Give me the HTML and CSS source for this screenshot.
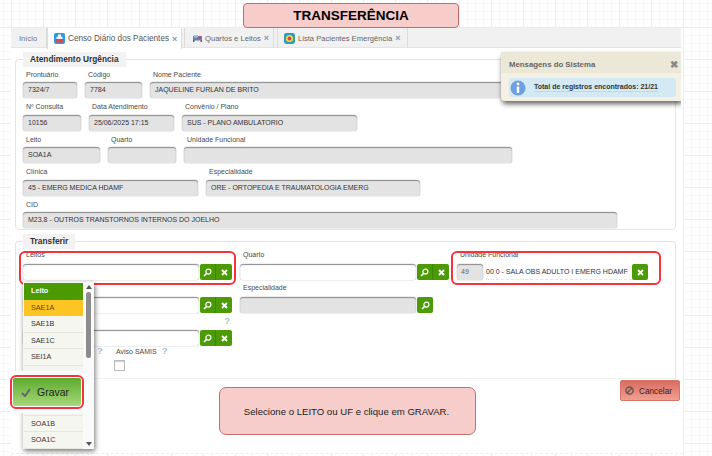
FILE: index.html
```html
<!DOCTYPE html>
<html lang="pt-BR">
<head>
<meta charset="utf-8">
<title>Transferência</title>
<link rel="stylesheet" href="styles.css">
</head>
<body>
<h1 class="title">TRANSFERÊNCIA</h1>
<main class="panel">
  <nav class="tabs">
    <a class="tab tab-home">Início</a>
    <a class="tab tab-active">
      <svg class="tab-icon" viewBox="0 0 11 11"><rect width="11" height="11" rx="2" fill="#2c9be0"/><rect x="4" y="1.5" width="3" height="2.4" fill="#fff"/><rect x="2.5" y="3.8" width="6" height="2.2" fill="#f4f4f4"/><rect x="1.6" y="6" width="7.8" height="3.6" rx=".6" fill="#d8465a"/></svg>
      <span>Censo Diário dos Pacientes</span><span class="tab-x">×</span>
    </a>
    <a class="tab tab-beds">
      <svg class="tab-icon-small" viewBox="0 0 9 8"><rect y="2" width="9" height="4.5" fill="#5b86b8"/><rect x="1" y="1" width="4" height="2.5" fill="#9ec0e0"/><rect x="5" y="2.5" width="3" height="2" fill="#c84b52"/><rect y="6" width="1.4" height="2" fill="#3e5f8a"/><rect x="7.6" y="6" width="1.4" height="2" fill="#3e5f8a"/></svg>
      <span>Quartos e Leitos</span><span class="tab-x">×</span>
    </a>
    <a class="tab tab-list">
      <svg class="tab-icon" viewBox="0 0 11 11"><rect width="11" height="11" rx="2.4" fill="#2c9bbd"/><circle cx="5.5" cy="5.5" r="3.6" fill="#f2d64b"/><circle cx="5.5" cy="5.5" r="1.9" fill="#d8465a"/></svg>
      <span>Lista Pacientes Emergência</span><span class="tab-x">×</span>
    </a>
  </nav>

  <aside class="toast">
    <header class="toast-head"><span>Mensagens do Sistema</span><b class="toast-x">✖</b></header>
    <div class="toast-body">
      <svg class="info" viewBox="0 0 16 16"><circle cx="8" cy="8" r="7.5" fill="#6f9fe0"/><circle cx="8" cy="4" r="1.4" fill="#fff"/><rect x="6.8" y="6.4" width="2.4" height="6.6" rx=".6" fill="#fff"/></svg>
      <span class="toast-text">Total de registros encontrados: 21/21</span>
    </div>
  </aside>

  <section class="group group-top">
    <div class="legend">Atendimento Urgência</div>
    <div class="row row-first">
      <div class="field w54"><label>Prontuário</label><div class="input ro">7324/7</div></div>
      <div class="field w57"><label>Código</label><div class="input ro">7784</div></div>
      <div class="field w467"><label>Nome Paciente</label><div class="input ro">JAQUELINE FURLAN DE BRITO</div></div>
    </div>
    <div class="row">
      <div class="field w58"><label>Nº Consulta</label><div class="input ro">10156</div></div>
      <div class="field w85"><label>Data Atendimento</label><div class="input ro">25/06/2025 17:15</div></div>
      <div class="field w175"><label>Convênio / Plano</label><div class="input ro">SUS - PLANO AMBULATORIO</div></div>
    </div>
    <div class="row">
      <div class="field w77"><label>Leito</label><div class="input ro">SOA1A</div></div>
      <div class="field w68"><label>Quarto</label><div class="input ro"></div></div>
      <div class="field w328"><label>Unidade Funcional</label><div class="input ro"></div></div>
    </div>
    <div class="row">
      <div class="field w175"><label>Clínica</label><div class="input ro">45 - EMERG MEDICA HDAMF</div></div>
      <div class="field w214"><label>Especialidade</label><div class="input ro">ORE - ORTOPEDIA E TRAUMATOLOGIA EMERG</div></div>
    </div>
    <div class="row">
      <div class="field w594"><label>CID</label><div class="input ro">M23.8 - OUTROS TRANSTORNOS INTERNOS DO JOELHO</div></div>
    </div>
  </section>

  <section class="group group-bottom">
    <div class="legend">Transferir</div>
    <div class="t-row t-row-first">
      <div class="field w209 leitos">
        <label>Leitos</label>
        <div class="combo"><div class="input edit grow"></div><div class="btns"><button class="btn"><svg class="i" viewBox="0 0 9 9"><circle cx="5.4" cy="3.6" r="2.5" fill="none" stroke="#fff" stroke-width="1.2"/><path d="M3.6 5.4 1 8" stroke="#fff" stroke-width="1.6"/></svg></button><button class="btn"><svg class="i" viewBox="0 0 9 9"><path d="M2 2l5 5M7 2 2 7" stroke="#fff" stroke-width="1.9"/></svg></button></div></div>
        <div class="dropdown">
          <ul class="dd-list">
            <li class="dd-head">Leito</li>
            <li class="dd-sel">SAE1A</li>
            <li>SAE1B</li>
            <li>SAE1C</li>
            <li>SEI1A</li>
            <li>&nbsp;</li>
            <li>&nbsp;</li>
            <li>&nbsp;</li>
            <li>SOA1B</li>
            <li>SOA1C</li>
          </ul>
          <div class="dd-scroll"><span class="dd-up"></span><span class="dd-thumb"></span><span class="dd-down"></span></div>
        </div>
      </div>
      <div class="field w209">
        <label>Quarto</label>
        <div class="combo"><div class="input edit grow"></div><div class="btns"><button class="btn"><svg class="i" viewBox="0 0 9 9"><circle cx="5.4" cy="3.6" r="2.5" fill="none" stroke="#fff" stroke-width="1.2"/><path d="M3.6 5.4 1 8" stroke="#fff" stroke-width="1.6"/></svg></button><button class="btn"><svg class="i" viewBox="0 0 9 9"><path d="M2 2l5 5M7 2 2 7" stroke="#fff" stroke-width="1.9"/></svg></button></div></div>
      </div>
      <div class="field w191 uf">
        <label>Unidade Funcional</label>
        <div class="combo">
          <div class="input ro uf-code">49</div>
          <div class="uf-text">00 0 - SALA OBS ADULTO I EMERG HDAMF</div>
          <div class="btns"><button class="btn btn-solo"><svg class="i" viewBox="0 0 9 9"><path d="M2 2l5 5M7 2 2 7" stroke="#fff" stroke-width="1.9"/></svg></button></div>
        </div>
      </div>
    </div>
    <div class="t-row">
      <div class="field w209">
        <label>&nbsp;</label>
        <div class="combo"><div class="input edit grow"></div><div class="btns"><button class="btn"><svg class="i" viewBox="0 0 9 9"><circle cx="5.4" cy="3.6" r="2.5" fill="none" stroke="#fff" stroke-width="1.2"/><path d="M3.6 5.4 1 8" stroke="#fff" stroke-width="1.6"/></svg></button><button class="btn"><svg class="i" viewBox="0 0 9 9"><path d="M2 2l5 5M7 2 2 7" stroke="#fff" stroke-width="1.9"/></svg></button></div></div>
      </div>
      <div class="field w193">
        <label>Especialidade</label>
        <div class="combo"><div class="input ro grow"></div><div class="btns"><button class="btn btn-solo2"><svg class="i" viewBox="0 0 9 9"><circle cx="5.4" cy="3.6" r="2.5" fill="none" stroke="#fff" stroke-width="1.2"/><path d="M3.6 5.4 1 8" stroke="#fff" stroke-width="1.6"/></svg></button></div></div>
      </div>
    </div>
    <div class="t-row">
      <div class="field w209">
        <label class="help-right"><span class="help">?</span></label>
        <div class="combo"><div class="input edit grow"></div><div class="btns"><button class="btn"><svg class="i" viewBox="0 0 9 9"><circle cx="5.4" cy="3.6" r="2.5" fill="none" stroke="#fff" stroke-width="1.2"/><path d="M3.6 5.4 1 8" stroke="#fff" stroke-width="1.6"/></svg></button><button class="btn"><svg class="i" viewBox="0 0 9 9"><path d="M2 2l5 5M7 2 2 7" stroke="#fff" stroke-width="1.9"/></svg></button></div></div>
      </div>
    </div>
    <div class="check-row">
      <div class="check-blank"><span class="help">?</span></div>
      <div class="check-field">
        <label class="check-label">Aviso SAMIS <span class="help help-gap">?</span></label>
        <span class="checkbox"></span>
      </div>
    </div>
  </section>

  <footer class="actions">
    <button class="gravar">
      <span class="gravar-inner"><svg class="check" viewBox="0 0 10 9"><path d="M1 5l3 3 5-7" fill="none" stroke="#666" stroke-width="2"/></svg>Gravar</span>
    </button>
    <div class="note">Selecione o LEITO ou UF e clique em GRAVAR.</div>
    <button class="cancel"><svg class="cancel-i" viewBox="0 0 9 9"><circle cx="4.5" cy="4.5" r="3.6" fill="none" stroke="#6b5552" stroke-width="1.5"/><path d="M2 7l5-5" stroke="#6b5552" stroke-width="1.4"/></svg>Cancelar</button>
  </footer>
</main>
</body>
</html>
```

FILE: styles.css
```css
*, *::before { box-sizing: border-box; }
html, body { margin: 0; padding: 0; }
body {
  width: 712px;
  height: 456px;
  overflow: hidden;
  font-family: "Liberation Sans", Arial, sans-serif;
  font-size: 7px;
  color: #444;
  background-color: #fff;
  background-image:
    linear-gradient(to right, #ececec 1px, transparent 1px),
    linear-gradient(to bottom, #ececec 1px, transparent 1px),
    linear-gradient(to right, #f8f8f8 1px, transparent 1px),
    linear-gradient(to bottom, #f8f8f8 1px, transparent 1px);
  background-size: 32px 32px, 32px 32px, 8px 8px, 8px 8px;
  background-position: 11px 27px, 11px 27px, 3px 3px, 3px 3px;
}
.title {
  margin: 3px 0 0 243px;
  width: 216px;
  height: 25px;
  padding-bottom: 1px;
  display: flex;
  align-items: center;
  justify-content: center;
  background: #f6cdcb;
  border: 1px solid #c46f6d;
  border-radius: 4px;
  font-size: 13.5px;
  font-weight: 700;
  color: #000;
}
.panel {
  position: relative;
  margin-left: 11px;
  width: 672px;
  height: 426px;
  background: #fff;
  border-bottom: 1px dashed #eee;
}
.tabs {
  display: flex;
  width: 670px;
  height: 20px;
  background: #f1f1f1;
  border-bottom: 1px solid #e4e4e4;
  font-size: 7.6px;
  color: #666;
}
.tab {
  display: flex;
  align-items: center;
  height: 20px;
  padding-left: 8px;
  border-right: 1px solid #dcdcdc;
  white-space: nowrap;
}
.tab-home { width: 36px; color: #777; }
.tab-active {
  width: 135px;
  height: 21px;
  padding-left: 6px;
  background: #fff;
  color: #555;
  font-size: 8.2px;
  border-left: 1px solid #dcdcdc;
  z-index: 1;
}
.tab-beds { width: 90px; margin-left: 2px; padding-left: 8px; border-left: 1px solid #dcdcdc; }
.tab-list { width: 131px; margin-left: 3px; padding-left: 6px; border-left: 1px solid #dcdcdc; }
.tab-icon { width: 11px; height: 11px; margin-right: 3px; flex: none; }
.tab-icon-small { width: 9px; height: 8px; margin-right: 3px; flex: none; }
.tab-x { margin-left: 3px; font-size: 9px; line-height: 8px; color: #7f9cc2; font-weight: 700; }

.group {
  margin: 11px 0 0 4px;
  width: 661px;
  padding: 0 7px;
  border: 1px solid #e9e4d3;
  border-radius: 4px;
}
.group-top { height: 171px; }
.group-bottom { height: 138px; border-color: #e9e4d3 #e9e4d3 #f3f3ee; border-radius: 4px 4px 0 0; }
.legend {
  display: block;
  width: max-content;
  height: 15px;
  margin-top: -8px;
  padding: 0 7px;
  line-height: 15px;
  background: #f2f2f2;
  font-size: 8.3px;
  font-weight: 700;
  color: #333;
}
.row { display: flex; gap: 8px; }
.row-first { margin-top: -1.5px; }
.field { flex: none; position: relative; }
.field label {
  display: block;
  height: 16.5px;
  padding: 1px 0 0 3px;
  line-height: 15.5px;
  color: #4a4a4a;
  white-space: nowrap;
}
.input {
  height: 16px;
  line-height: 16px;
  padding: 0 5px;
  border-radius: 3px;
  overflow: hidden;
  white-space: nowrap;
  color: #333;
}
.ro {
  background: #e3e3e3;
  box-shadow: inset 0 1px 1px #8c8c8c, 0 0 0 .5px #ddd;
}
.edit {
  background: #fff;
  box-shadow: inset 0 1px 1px #8c8c8c, 0 0 0 .5px #ddd;
}
.w54 { width: 54px; }
.w57 { width: 57px; }
.w467 { width: 467px; }
.w58 { width: 58px; }
.w85 { width: 85px; }
.w175 { width: 175px; }
.w77 { width: 77px; }
.w68 { width: 68px; }
.w328 { width: 328px; }
.w214 { width: 214px; }
.w594 { width: 594px; }
.w209 { width: 209px; }
.w193 { width: 193px; }
.w191 { width: 191px; }

.t-row { display: flex; gap: 8px; }
.t-row-first { margin-top: -2px; }
.t-row .field label { height: 17px; padding-top: 0; line-height: 15px; }
.combo { display: flex; align-items: stretch; height: 16px; }
.grow { flex: 1; }
.btns { display: flex; margin-left: 1px; }
.btn {
  width: 16px;
  height: 16px;
  padding: 0;
  border: 0;
  background: #4c9a06;
  display: flex;
  align-items: center;
  justify-content: center;
}
.btn:first-child { border-radius: 2px 0 0 2px; border-right: 1px solid #3f8504; }
.btn:last-child { border-radius: 0 2px 2px 0; border-right: 0; }
.btn-solo, .btn-solo2 { border-radius: 2px !important; }
.i { width: 9px; height: 9px; }

.leitos::before {
  content: "";
  position: absolute;
  left: -4px;
  top: 4px;
  width: 217px;
  height: 34px;
  border: 2px solid #f6323f;
  border-radius: 6px;
  pointer-events: none;
}
.uf::before {
  content: "";
  position: absolute;
  left: -6px;
  top: 4px;
  width: 210px;
  height: 34px;
  border: 2px solid #f6323f;
  border-radius: 6px;
  pointer-events: none;
}
.uf-code { flex: none; width: 26px; padding: 0 4px; color: #666; }
.uf-text {
  flex: none;
  width: 146px;
  margin-left: 3px;
  line-height: 16px;
  color: #333;
  border-bottom: 1px dashed #e5e5e5;
  white-space: nowrap;
  overflow: hidden;
}
.uf .btns { margin-left: 0; }

.help { color: #9ec3dd; font-weight: 700; font-size: 9.5px; }
.t-row .field .help-right { text-align: right; padding-right: 2px; }
.help-gap { margin-left: 3px; }

.check-row { display: flex; height: 29px; margin-top: -2px; }
.check-blank { width: 93px; padding: 0 0 0 74px; line-height: 14px; }
.check-field { position: relative; }
.check-label { display: block; height: 16px; line-height: 14px; color: #4a4a4a; white-space: nowrap; }
.checkbox {
  display: block;
  width: 11px;
  height: 11px;
  margin-left: -2px;
  border: 1px solid #bbb;
  box-shadow: inset 0 1px 1px #ccc;
  background: #fff;
}

.dropdown {
  position: absolute;
  left: 0;
  top: 35px;
  width: 71px;
  height: 167px;
  display: flex;
  background: #f6f6f0;
  box-shadow: 1px 2px 5px rgba(0,0,0,.55);
  z-index: 3;
}
.dd-list {
  list-style: none;
  margin: 0;
  padding: 1px 0 0 1px;
  width: 60px;
  color: #333;
}
.dd-list li {
  height: 16.6px;
  line-height: 16.6px;
  padding-left: 7px;
  font-size: 7.2px;
  border-bottom: 1px solid #e6e6dd;
}
.dd-list .dd-head { background: #4b9a02; color: #fff; font-weight: 700; border: 0; }
.dd-list .dd-sel { background: #fdc524; color: #5a4a10; border: 0; }
.dd-scroll {
  position: relative;
  width: 11px;
  background: #fafafa;
  display: flex;
  flex-direction: column;
  align-items: center;
  padding-top: 3px;
}
.dd-up { width: 0; height: 0; border: 3px solid transparent; border-top: 0; border-bottom: 4px solid #555; }
.dd-thumb { width: 5px; height: 66px; margin-top: 3px; background: #8c8c8c; border-radius: 3px; }
.dd-down { width: 0; height: 0; margin-top: auto; margin-bottom: 3px; border: 3px solid transparent; border-bottom: 0; border-top: 4px solid #555; }

.actions { display: flex; align-items: flex-start; }
.gravar {
  margin: -4px 0 0 -1px;
  width: 74px;
  height: 34px;
  padding: 1px;
  border: 2px solid #f6323f;
  border-radius: 6px;
  background: #fff;
  box-shadow: 0 0 0 4px #fff;
  position: relative;
  z-index: 5;
  flex: none;
}
.gravar-inner {
  display: flex;
  align-items: center;
  justify-content: center;
  height: 100%;
  padding-right: 4px;
  border-radius: 2px;
  background: linear-gradient(#5cab2d, #a5d87a);
  font: 10.4px "Liberation Sans", Arial, sans-serif;
  color: #222;
}
.check { width: 10px; height: 9px; margin-right: 6px; }
.note {
  flex: none;
  margin: 8px 0 0 135px;
  width: 257px;
  height: 48px;
  display: flex;
  align-items: center;
  justify-content: center;
  padding-right: 2px;
  background: #f6cdcb;
  border: 1px solid #c46f6d;
  border-radius: 7px;
  font-size: 9.6px;
  color: #222;
}
.cancel {
  flex: none;
  margin: 1px 0 0 144px;
  width: 60px;
  height: 21px;
  padding: 0 3px 0 0;
  display: flex;
  align-items: center;
  justify-content: center;
  border: 1px solid #d8746a;
  border-radius: 2px;
  background: linear-gradient(#d96c62, #f0a090);
  font: 8.3px "Liberation Sans", Arial, sans-serif;
  color: #3b2220;
}
.cancel-i { width: 9px; height: 9px; margin-right: 5px; }

.toast {
  position: absolute;
  left: 490px;
  top: 24px;
  width: 180px;
  height: 49px;
  background: #f4f1e4;
  border-radius: 4px 0 0 4px;
  box-shadow: 1px 3px 5px rgba(0,0,0,.6);
  clip-path: inset(-10px 0 -10px -10px);
  z-index: 4;
}
.toast-head {
  display: flex;
  justify-content: space-between;
  align-items: center;
  height: 21px;
  padding: 3px 3px 0 8px;
  background: #ece8d8;
  font-size: 7.8px;
  font-weight: 700;
  color: #666;
}
.toast-x { font-size: 10px; color: #888; }
.toast-body {
  display: flex;
  align-items: center;
  height: 19px;
  margin: 5px 5px 0 8px;
  background: #d3e9f3;
  border-radius: 3px;
}
.info { width: 16px; height: 16px; margin-left: 1px; flex: none; }
.toast-text {
  margin-left: 8px;
  padding: 0 0 1px 0;
  font-weight: 700;
  color: #333;
  white-space: nowrap;
  border-bottom: 1px solid #c0d8ea;
}
```
